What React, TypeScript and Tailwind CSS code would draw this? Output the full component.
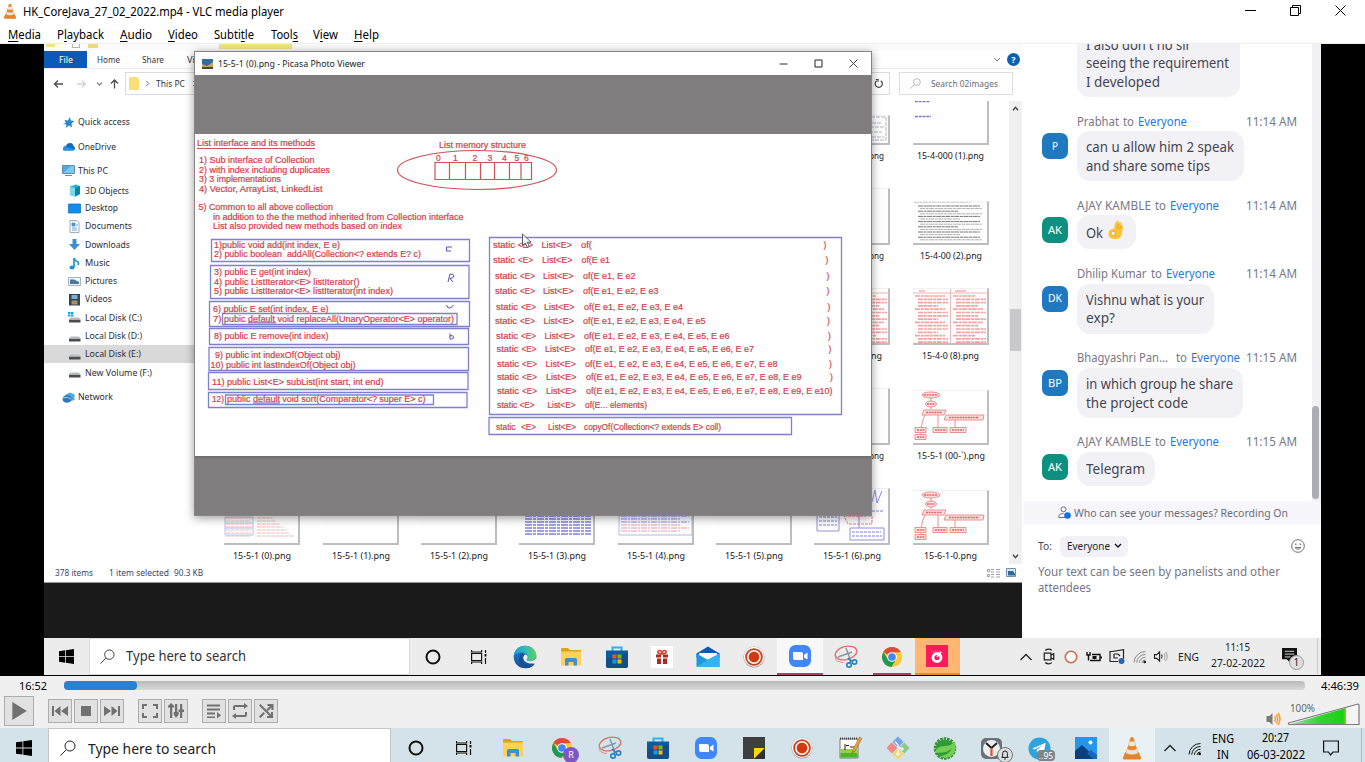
import { useLayoutEffect, useRef, useState, type ReactNode } from "react";

/* Text squeezed or stretched horizontally to a known width. */
function Fit({ w, children, className = "" }: { w: number; children: ReactNode; className?: string }) {
  const ref = useRef<HTMLSpanElement>(null);
  const [scale, setScale] = useState(1);
  useLayoutEffect(() => {
    if (ref.current) setScale(w / ref.current.getBoundingClientRect().width);
  }, []);
  return (
    <span className={`inline-block shrink-0 whitespace-nowrap text-left ${className}`} style={{ width: w }}>
      <span ref={ref} className="inline-block origin-left whitespace-nowrap" style={{ transform: `scaleX(${scale})` }}>
        {children}
      </span>
    </span>
  );
}

/* ---------- Icons ---------- */

const Cone = ({ className }: { className: string }) => (
  <svg viewBox="0 0 20 24" className={className}>
    <path d="M3.500 16h13L19 21.500q.5 2-1 2H2q-1.500 0-1-2z" fill="#e5822a" />
    <path d="M8.500 1.500Q10 .5 11.500 1.500L16.500 18Q10 21.500 3.500 18z" fill="#ee8526" />
    <path d="M7.500 5.500h5l1.200 4Q10 11 6.300 9.500z" fill="#e8e8e4" />
    <path d="M5.200 13Q10 15.500 14.800 13l1.200 4Q10 20 4 17z" fill="#e4e4e0" />
  </svg>
);
const WinLogo = ({ className }: { className: string }) => (
  <svg viewBox="0 0 16 16" className={className}>
    <path d="M0 2.300 6.500 1.400v6.200H0zM7.300 1.300 16 0v7.600H7.300zM0 8.400h6.500v6.200L0 13.700zM7.300 8.400H16V16l-8.700-1.300z" fill="#000" />
  </svg>
);
const Lens = ({ className }: { className: string }) => (
  <svg viewBox="0 0 16 16" className={className} fill="none" stroke="currentColor">
    <circle cx="10" cy="6" r="5" />
    <path d="M6.300 9.700.5 15.500" />
  </svg>
);
const Ring = () => (
  <svg viewBox="0 0 16 16" className="size-4">
    <circle cx="8" cy="8" r="6.500" fill="none" stroke="#111" strokeWidth="2" />
  </svg>
);
const TaskView = () => (
  <svg viewBox="0 0 16 16" className="size-4" fill="none" stroke="#111" strokeWidth="1.200">
    <path d="M.6 4.500h10v7h-10zM.6 1v2h10V1M.6 15v-2h10v2M14.500 1v3M14.500 9v6" />
    <rect x="13.500" y="5" width="2" height="2.500" fill="#111" stroke="none" />
  </svg>
);
const Folder = () => (
  <svg viewBox="0 0 22 20" className="h-5 w-[22px]">
    <path d="M1 2q0-1 1-1h6l2 2h11v15H1z" fill="#e0a413" />
    <path d="M1 4.500h20V18.500H1z" fill="#fcd25c" />
    <path d="M5 18.500V12.500Q5 11 6.500 11h9q1.500 0 1.500 1.500v6h-3.500V15h-5v3.500z" fill="#3d91d3" />
  </svg>
);
const Store = () => (
  <svg viewBox="0 0 24 24" className="size-6">
    <path d="M7.500 7V2.500h9V7" fill="none" stroke="#25b6ee" strokeWidth="2" />
    <path d="M1 5.500h22V21q0 2-2 2H3q-2 0-2-2z" fill="#0d5a9f" />
    <path d="M1 14 23 8v13q0 2-2 2H3q-2 0-2-2z" fill="#1b3f70" opacity=".5" />
    <path d="M7.500 9.500h4v4h-4z" fill="#f25022" />
    <path d="M12.500 9.500h4v4h-4z" fill="#7fba00" />
    <path d="M7.500 14.500h4v4h-4z" fill="#00a4ef" />
    <path d="M12.500 14.500h4v4h-4z" fill="#ffb900" />
  </svg>
);
const Edge = () => (
  <svg viewBox="0 0 24 24" className="size-6">
    <defs>
      <linearGradient id="edgeTop" x1="0" x2="1"><stop offset="0" stopColor="#1b9de2" /><stop offset=".6" stopColor="#35bfb0" /><stop offset="1" stopColor="#66d04c" /></linearGradient>
      <linearGradient id="edgeLow" x1="0" x2="0" y1="0" y2="1"><stop offset="0" stopColor="#1a86d9" /><stop offset="1" stopColor="#164f93" /></linearGradient>
    </defs>
    <circle cx="12" cy="12" r="11.300" fill="url(#edgeLow)" />
    <path d="M.8 11C1.500 4.500 6.500.7 12 .7c6.500 0 11.300 4.500 11.300 9.500 0 3.800-3 6-6 6-2.700 0-3.700-1-3.700-1.700 0-.6 1-1 1-2.800 0-2.500-2.300-4.300-5.500-4.300-4 0-7.300 1.600-8.300 3.600z" fill="url(#edgeTop)" />
    <path d="M13.600 14.500c0 .8 1 1.700 3.700 1.700 2 0 4.200-1 5.300-2.800l1.400 1.800-1.500 3.500-3-.2c-6 .5-10-3-9-7 .3-1 1-1.700 2-2 1.400.5 2.100 1.500 2.100 2.600 0 1.500-1 1.800-1 2.400z" fill="#ececec" />
    <path d="M9 8c-2 1.500-3 3.500-3 5.800 0 5.200 4.500 9.200 8 9.400 3.500 0 6.500-2 8-4.700-6 3-12.500.5-12.500-5 0-1.200.5-2.500 1.500-3.500-.5-1-1-1.700-2-2z" fill="#174f96" />
  </svg>
);
const Chrome = () => (
  <svg viewBox="0 0 24 24" className="size-[22px]">
    <circle cx="12" cy="12" r="11" fill="#fcc934" />
    <path d="M12 12 2.500 6.500A11 11 0 0 1 21.500 6.500L12 7z" fill="#dd4b3c" />
    <path d="M2.500 6.500A11 11 0 0 0 11.500 23L16.500 14.500 12 17 7.500 14.500z" fill="#1d9a55" />
    <circle cx="12" cy="12" r="5.300" fill="#fff" />
    <circle cx="12" cy="12" r="4.200" fill="#4486f4" />
  </svg>
);
const Snip = () => (
  <svg viewBox="0 0 24 24" className="size-6" fill="none">
    <ellipse cx="12" cy="8" rx="11" ry="6.500" stroke="#e26a6a" strokeWidth="1.300" transform="rotate(-14 12 8)" />
    <path d="M1.500 12Q1 17 9 17.500" stroke="#e88" />
    <path d="m4 12 14-5M12 3l4.500 12" stroke="#8a97a3" strokeWidth="1.500" />
    <circle cx="15" cy="20" r="2.200" stroke="#2a84c4" strokeWidth="1.700" />
    <circle cx="20.500" cy="17" r="2.200" stroke="#2a84c4" strokeWidth="1.700" />
    <path d="m14 13 3 3-1.500 2M17 16h2" stroke="#2a84c4" strokeWidth="1.700" />
  </svg>
);
const ZoomIcon = () => (
  <svg viewBox="0 0 24 24" className="size-6">
    <rect x="1" y="1" width="22" height="22" rx="6.500" fill="#4087fc" />
    <path d="M5 8h8q2 0 2 2v6H7q-2 0-2-2zM16 11l3.500-2.500v7L16 13.500z" fill="#fff" />
  </svg>
);
const Rec = () => (
  <svg viewBox="0 0 24 24" className="size-[22px]">
    <circle cx="12" cy="12" r="11.500" fill="#9b9b9b" />
    <circle cx="12" cy="11.700" r="11" fill="#fff" />
    <circle cx="12" cy="12" r="8.600" fill="none" stroke="#c8411a" strokeWidth="2" />
    <circle cx="12" cy="12" r="5.900" fill="#cf3a10" />
  </svg>
);
const Gift = () => (
  <svg viewBox="0 0 22 22" className="size-[22px]">
    <path d="M0 0h22v22H0z" fill="#fff" />
    <path d="M5 8.500h5v3H5zM12 8.500h5v3h-5zM6 12.500h4V18H6zM12 12.500h4V18h-4z" fill="#b0291f" />
    <path d="M11 8C6 8 6 5 8 4.500s3 2 3 3.500c0-1.500 1-4 3-3.500s2 3.500-3 3.500z" fill="none" stroke="#d3452f" strokeWidth="1.500" />
  </svg>
);
const Mail = () => (
  <svg viewBox="0 0 24 24" className="size-6">
    <path d="M.5 8.500 12 1.500l11.500 7V13H.5z" fill="#0d5ca8" />
    <path d="M3 8h18v9H3z" fill="#fff" />
    <path d="M.5 8.500V22h23V8.500L12 15z" fill="#1f97df" />
    <path d="M.5 22 12 14.500 23.500 8.500V22z" fill="#35b3ee" />
  </svg>
);
const Wifi = ({ fade }: { fade?: boolean }) => (
  <svg viewBox="0 0 14 14" className="size-3.5" fill="none" stroke={fade ? "#888" : "#111"} strokeWidth="1">
    <path d="M1 12.500A11.500 11.500 0 0 1 12.500 1.500M3.700 12.700A8.500 8.500 0 0 1 12.500 4.500M6.400 12.800A6 6 0 0 1 12.500 7.300M9 13A3.500 3.500 0 0 1 12.500 10" />
    <circle cx="11.700" cy="12" r="1.300" fill="#111" stroke="none" />
  </svg>
);
const Chevron = () => (
  <svg viewBox="0 0 14 8" className="h-2 w-3.5" fill="none" stroke="#222" strokeWidth="1.300"><path d="m1.500 7 5.500-5.500L12.500 7" /></svg>
);

/* ---------- Player chrome ---------- */

const menus: [string, string, string, number, number][] = [
  ["", "M", "edia", 33, 16], ["P", "l", "ayback", 47, 16], ["", "A", "udio", 32, 16], ["", "V", "ideo", 30, 16],
  ["Subti", "t", "le", 40, 16.5], ["Tool", "s", "", 27, 15.5], ["V", "i", "ew", 25, 16], ["", "H", "elp", 25, 0],
];

function TitleBar() {
  return (
    <header className="flex h-11 shrink-0 flex-col border-b border-[#eeeeee] bg-white text-[12px] leading-none text-black">
      <div className="flex h-6 items-center pl-[3px]">
        <Cone className="mb-[2px] h-4 w-[14px]" />
        <Fit w={261} className="ml-[6px]">HK_CoreJava_27_02_2022.mp4 - VLC media player</Fit>
        <div className="ml-auto flex h-5 items-center gap-[34px] pr-[19px] pb-[3px]">
          <svg viewBox="0 0 11 11" className="size-[11px]"><path d="M0 5.500h11" stroke="#000" /></svg>
          <svg viewBox="0 0 11 11" className="size-[11px]" fill="none" stroke="#000"><path d="M.5 2.500h8v8h-8zM2.500 2.500v-2h8v8h-2" /></svg>
          <svg viewBox="0 0 11 11" className="size-[11px]" stroke="#000"><path d="m.5.5 10 10M10.500.5l-10 10" /></svg>
        </div>
      </div>
      <nav className="flex h-[19px] items-center pt-[2px] pl-2">
        {menus.map(([a, u, b, w, gap]) => (
          <span key={a + u + b} className="flex" style={{ marginRight: gap }}>
            <Fit w={w}>{a}<span className="underline underline-offset-2">{u}</span>{b}</Fit>
          </span>
        ))}
      </nav>
    </header>
  );
}

function CtlButton({ children, big }: { children: ReactNode; big?: boolean }) {
  return (
    <button className={`flex items-center justify-center border border-[#adadad] bg-[#e1e1e1] ${big ? "size-[30px]" : "size-6"}`}>
      <svg viewBox="0 0 18 18" className={big ? "size-5" : "size-[18px]"} fill="#717171" stroke="none">{children}</svg>
    </button>
  );
}

function Controls() {
  return (
    <section className="flex h-[52px] shrink-0 flex-col bg-[#f0f0f0]">
      <div className="flex h-[19px] items-center text-[11.5px] leading-none text-black">
        <Fit w={28} className="ml-[19px]">16:52</Fit>
        <div className="ml-[17px] h-[9px] w-[1241px] rounded bg-linear-to-b from-[#b9b9b9] to-[#dadada]">
          <div className="h-full w-[73px] rounded bg-[#2b80d2]" />
        </div>
        <Fit w={38} className="ml-4">4:46:39</Fit>
      </div>
      <div className="flex h-[33px] items-center pb-[1px] pl-1">
        <CtlButton big><path d="M3 1v16l13-8z" /></CtlButton>
        <div className="ml-[14px] flex gap-[2px]">
          <CtlButton><path d="M1 4h2v10H1zM9.500 4v10L3.500 9zM17 4v10L10 9z" /></CtlButton>
          <CtlButton><path d="M4 4h10v10H4z" /></CtlButton>
          <CtlButton><path d="M15 4h2v10h-2zM1 4v10l7-5zM8.500 4v10l6-5z" /></CtlButton>
        </div>
        <div className="ml-[14px] flex gap-[2px]">
          <CtlButton><path d="M1 2h5v2H3v3H1zM12 2h5v5h-2V4h-3zM1 11h2v3h3v2H1zM15 11h2v5h-5v-2h3z" /></CtlButton>
          <CtlButton><path d="M3 4.500h2.200V16H3zM1 4l3-3 3.200 3v1.500H1zM8 2h2.200v9H8zM6.700 10h5v2.500L9 16l-2.300-3.500zM13 2h2.200v14H13zM11.500 7.500H17v2.500h-5.500z" /></CtlButton>
        </div>
        <div className="ml-[14px] flex gap-[2px]">
          <CtlButton><path d="M2 2.500h13v2H2zM2 6.500h13v2H2zM2 10.500h8v2H2zM2 14.500h8v1.500H2zM12 10l4 3.200-4 3.200z" /></CtlButton>
          <CtlButton><path d="M2 8V5q0-2 2-2h9V1l4 3-4 3V5H4v3zM16 10v3q0 2-2 2H5v2l-4-3 4-3v2h9v-3z" /></CtlButton>
          <CtlButton><path d="m2 3.500 1.500-1.500L14 12.500V10h2v6h-6v-2h2.500zM10.500 2h6v6h-2V5.500L11 9 9.500 7.500 12.800 4h-2.300zM2 14.500 6.500 10 8 11.500 3.500 16z" /></CtlButton>
        </div>
        <div className="ml-auto flex items-start self-start pr-[5px]">
          <svg viewBox="0 0 14 14" className="mt-[17px] h-[14px] w-[15px]" fill="none">
            <path d="M0 4h3l3-3v12l-3-3H0z" fill="#7a7a7a" />
            <path d="M8 4.500q2 2.500 0 5M9.500 2.500q3.500 4.500 0 9M11.500 1q4 6 0 12" stroke="#f59a23" strokeWidth="1.400" />
          </svg>
          <div className="relative ml-[6px] h-[33px] w-[73px]">
            <svg viewBox="0 0 73 33" className="h-[33px] w-[73px]">
              <defs><linearGradient id="vol" x1="0" x2="1"><stop offset="0" stopColor="#a5dfa3" /><stop offset=".55" stopColor="#31d430" /><stop offset=".95" stopColor="#1dd013" /><stop offset="1" stopColor="#a0c51a" /></linearGradient></defs>
              <path d="M2 29.500 71 9.500q1 0 1 1v19z" fill="#f5f5f5" />
              <path d="M2 29.500 59 13v16.500z" fill="url(#vol)" />
              <path d="M1.500 28 71 9q1 0 1 1v19.500H3q-2 0-1.500-1.500z" fill="none" stroke="#7b7b7b" strokeWidth="1.200" />
            </svg>
            <div className="absolute top-2 left-[3px] text-[10px] leading-none text-[#5c6770]"><Fit w={25}>100%</Fit></div>
          </div>
        </div>
      </div>
    </section>
  );
}

function Cell({ w = "w-[48.2px]", children }: { w?: string; children: ReactNode }) {
  return <div className={`relative flex h-full shrink-0 items-center justify-center ${w}`}>{children}</div>;
}

function OuterTaskbar() {
  return (
    <footer className="h-[34px] shrink-0 overflow-hidden bg-[#d4e3ea]">
      <div className="flex h-10 items-center text-black">
        <Cell w="w-[48px]"><WinLogo className="size-4" /></Cell>
        <div className="flex h-full w-[343px] shrink-0 items-center border border-[#c5c5c5] bg-white text-[14.5px] leading-none text-[#222]">
          <Lens className="ml-[11px] size-4" />
          <Fit w={128} className="ml-[12px]">Type here to search</Fit>
        </div>
        <Cell w="w-[49px]"><Ring /></Cell>
        <Cell w="w-[48px]"><TaskView /></Cell>
        <Cell w="w-[50px]"><Folder /></Cell>
        <Cell>
          <Chrome />
          <span className="absolute top-[19px] left-[25px] flex size-4 items-center justify-center rounded-full bg-[#7e57c2] text-[9px] text-white">R</span>
        </Cell>
        <Cell w="w-[48px]"><Snip /></Cell>
        <Cell w="w-[47.3px]"><Store /></Cell>
        <Cell><ZoomIcon /></Cell>
        <Cell><svg viewBox="0 0 22 22" className="size-[22px]"><path d="M0 0h22v22H0z" fill="#3f3f3f" /><path d="M11 11h11L11 22z" fill="#ffd500" /><path d="M22 11v11H11z" fill="#303030" /></svg></Cell>
        <Cell w="w-[48px]"><Rec /></Cell>
        <Cell w="w-[48px]">
          <svg viewBox="0 0 24 24" className="size-6">
            <path d="M2 3h18v19H2z" fill="#fdfdf6" stroke="#777" /><path d="M2.500 13h17v8.500h-17z" fill="#8fd14a" /><path d="M2.500 17h17v4.500h-17z" fill="#4db52c" />
            <path d="M2 2.500h18" stroke="#444" strokeWidth="2" strokeDasharray="1 1" /><path d="M7 8v6M8 9.500h3M12 11h5" stroke="#222" />
            <path d="m14 17 1-3.500L21.500 1 24 2.500 17 15z" fill="#eaa338" stroke="#8c5a1c" strokeWidth=".5" />
          </svg>
        </Cell>
        <Cell w="w-[48px]">
          <svg viewBox="0 0 24 24" className="size-6">
            <path d="m12 .5 5.500 5.500L12 11.500 6.500 6z" fill="#6fa5e8" /><path d="m5.500 6.500 6 5.500-5.500 5.500L.5 12z" fill="#f08a80" />
            <path d="m18.500 6.500 5 5.500-5 5.500L12.500 12z" fill="#8cc98a" /><path d="m12 12.500 5.500 5.500-5.500 5.500L6.500 18z" fill="#f5d66c" />
            <path d="M9 5.500 12 9v9M12 11l4 2" stroke="#eee" strokeWidth="1.500" fill="none" /><circle cx="12" cy="18" r="1.800" fill="#eee" /><circle cx="16" cy="13" r="1.800" fill="#eee" />
          </svg>
        </Cell>
        <Cell w="w-[47px]">
          <svg viewBox="0 0 24 24" className="size-6">
            <circle cx="12" cy="13" r="9.500" fill="#2f9a35" /><circle cx="12" cy="12.500" r="10" fill="none" stroke="#2f8f33" strokeWidth="2.500" strokeDasharray="2.500 1" />
            <path d="M2 17q1-7 10-7 7 0 10-5 2 10-3 14.500T6 20q9 0 13-8-5 4.500-10 4.500t-7 .5z" fill="#77cf52" />
          </svg>
        </Cell>
        <Cell w="w-[47px]">
          <svg viewBox="0 0 24 24" className="size-6">
            <rect x="1" y="2" width="21" height="21" rx="5" fill="#6b7177" /><circle cx="11.500" cy="12.500" r="8.500" fill="#eceff1" />
            <path d="m6 7 5.500 5L17 7" stroke="#222" strokeWidth="2" fill="none" /><path d="M11.500 12v8" stroke="#e2512b" strokeWidth="2.200" />
          </svg>
          <span className="absolute top-[19px] left-[28px] flex size-4 items-center justify-center rounded-full border border-[#777] bg-[#d9dfe2]">
            <svg viewBox="0 0 10 12" className="h-[10px] w-2" fill="none" stroke="#111" strokeWidth="1.200"><path d="M1 9h8L8 7.500V4a3 3 0 0 0-6 0v3.500zM4 11h2" /></svg>
          </span>
        </Cell>
        <Cell w="w-[46.5px]">
          <svg viewBox="0 0 24 24" className="size-[23px]"><circle cx="12" cy="12" r="11.500" fill="#2fa3dc" /><path d="m4.500 12 14-6-2.500 12.500-4.500-3.300-2 2-.5-3.700 6-5-8 4.500z" fill="#fff" /></svg>
          <span className="absolute top-[22px] left-[21px] rounded-sm bg-[#7d8589] px-[2px] text-[8.5px] leading-[11px] text-white">..95</span>
        </Cell>
        <Cell w="w-[46.500px]">
          <svg viewBox="0 0 22 22" className="size-[22px]"><path d="M0 0h22v22H0z" fill="#2796ea" /><path d="m0 14 7-6 15 14H0z" fill="#0b3f7e" /><path d="m12 16 4-3 6 5v4h-4z" fill="#1968b8" /><circle cx="15.500" cy="5.500" r="2" fill="#fff" /></svg>
        </Cell>
        <div className="flex h-full w-[46px] shrink-0 items-center justify-center bg-[#eaf1f4]"><Cone className="h-6 w-5" /></div>
        <div className="ml-[8px] flex items-center"><Chevron /></div>
        <div className="ml-[11px] pt-[2px]"><Wifi /></div>
        <div className="ml-[10px] flex h-full flex-col items-center pt-[5px] text-[12px] leading-none text-black"><Fit w={22}>ENG</Fit><Fit w={12} className="mt-[4px]">IN</Fit></div>
        <div className="ml-[13px] flex h-full w-[58px] flex-col items-center pt-[4px] text-[12px] leading-none text-black"><Fit w={27}>20:27</Fit><Fit w={58} className="mt-[5px]">06-03-2022</Fit></div>
        <svg viewBox="0 0 16 16" className="ml-[18px] size-4" fill="none" stroke="#111" strokeWidth="1.200"><path d="M.6 1h14.800v11H10l-2.500 3L5.500 12H.6z" /></svg>
        <div className="ml-auto mr-[3px] h-full w-px bg-[#a9b7be]" />
      </div>
    </footer>
  );
}

/* ---------- Explorer ---------- */

type NavItem = { label: string; w: number; indent: boolean; h: string; kind: string };
const navItems: NavItem[] = [
  { label: "Quick access", w: 52, indent: false, h: "h-6", kind: "star" },
  { label: "OneDrive", w: 38, indent: false, h: "h-[25px]", kind: "cloud" },
  { label: "This PC", w: 30, indent: false, h: "h-[23px]", kind: "pc" },
  { label: "3D Objects", w: 44, indent: true, h: "h-[17px]", kind: "cube" },
  { label: "Desktop", w: 33, indent: true, h: "h-[18px]", kind: "desktop" },
  { label: "Documents", w: 47, indent: true, h: "h-[18px]", kind: "doc" },
  { label: "Downloads", w: 45, indent: true, h: "h-[19px]", kind: "down" },
  { label: "Music", w: 25, indent: true, h: "h-[18px]", kind: "music" },
  { label: "Pictures", w: 32, indent: true, h: "h-[18px]", kind: "pic" },
  { label: "Videos", w: 27, indent: true, h: "h-[18px]", kind: "video" },
  { label: "Local Disk (C:)", w: 57, indent: true, h: "h-[19px]", kind: "diskc" },
  { label: "Local Disk (D:)", w: 57, indent: true, h: "h-[18px]", kind: "disk" },
  { label: "Local Disk (E:)", w: 56, indent: true, h: "h-[18px]", kind: "disk" },
  { label: "New Volume (F:)", w: 67, indent: true, h: "h-[19px]", kind: "disk" },
  { label: "Network", w: 35, indent: false, h: "h-[30px]", kind: "net" },
];

function NavIcon({ kind }: { kind: string }) {
  return (
    <svg viewBox="0 0 13 13" className="size-[13px] shrink-0">
      {kind === "star" && <path d="m8 1 .8 3.500 3.700.5-3 2.500.5 4-3-2-3.500 2.500 1-3.500L.8 8l3-1L2.500 4l3.500.5z" fill="#2b84c9" />}
      {kind === "cloud" && <><path d="M1 9q0-3 3-3 1-3 4-3 3 0 3.500 3 1.500.5 1.500 2.500T11 10.500H2.500Q1 10.500 1 9z" fill="#0f6cbd" /><path d="M1 9q1-3 4-2l7.500 2.500q-.5 1-1.500 1H2.500Q1 10.500 1 9z" fill="#2196e3" /></>}
      {kind === "pc" && <><path d="M.5 1.500h12v8H.5z" fill="#4ca9e6" stroke="#42728f" strokeWidth=".7" /><path d="m1 9 8-7h3v7z" fill="#7cc8f3" /><path d="M3 11.500h7" stroke="#6b8ea2" /></>}
      {kind === "cube" && <><path d="M2 2.500 8 .5l4 1.500v8L7 12.500 2 11z" fill="#27b3cb" /><path d="m2 2.500 5 1.500v8.500L2 11z" fill="#7edae8" /><path d="m7 4 5-2v8l-5 2.500z" fill="#0b86a5" /></>}
      {kind === "desktop" && <path d="M.5 2h12v9H.5z" fill="#118dec" stroke="#0c65b7" strokeWidth=".7" />}
      {kind === "doc" && <><path d="M2 .5h7l2 2v10H2z" fill="#f7fafc" stroke="#8c9aa5" strokeWidth=".8" /><path d="M4 3h3v3H4zM4 8h5M4 10h5M8 5h2" fill="#4b96c7" stroke="#4b96c7" strokeWidth=".8" /></>}
      {kind === "down" && <path d="M4.500 1h4v5H12l-5.500 6L1 6h3.500z" fill="#3d8ed2" />}
      {kind === "music" && <><path d="M6 1v9M6 1q1 3 4 4 1 1 0 3" stroke="#1c94e0" strokeWidth="1.700" fill="none" /><ellipse cx="4" cy="10.500" rx="2.500" ry="2" fill="#1c94e0" /></>}
      {kind === "pic" && <><path d="M.5 2.500h12v8H.5z" fill="#eef4f7" stroke="#91a2ad" strokeWidth=".8" /><path d="M2 4.500h4l5 2.500v2H2z" fill="#47799e" /></>}
      {kind === "video" && <><path d="M1 1h11v11.500H1z" fill="#3a444c" /><path d="M3.500 2h6v4h-6z" fill="#7cb0d2" /><path d="M3.500 7.500h6v4h-6z" fill="#a39366" /></>}
      {kind.startsWith("disk") && <><path d="M1 8.500h11.500v3H1z" fill="#4b4d4f" /><path d="M2.500 6.500H11l1.500 2H1z" fill="#b9bcbe" /></>}
      {kind === "diskc" && <path d="M0 1h2.500v2H0zM3 1h2.500v2H3zM0 3.500h2.500v2H0zM3 3.500h2.500v2H3z" fill="#1aa3ea" />}
      {kind === "net" && <><path d="M3 4 8 1.500l4.500 2V9L7 10.500z" fill="#4ea7dd" /><ellipse cx="5" cy="8" rx="4.500" ry="3.800" fill="#2a79b8" /><path d="M1 7q4-2 8 1" stroke="#9fd2ef" fill="none" /></>}
    </svg>
  );
}

function NavPane() {
  return (
    <aside className="flex w-[151px] shrink-0 flex-col pt-[10px] text-[9.5px] leading-none text-[#2d2d33]">
      {navItems.map((it) => (
        <div key={it.label} className={`flex shrink-0 items-center ${it.h} ${it.indent ? "pl-6" : "pl-[18px]"} ${it.label.includes("(E:)") ? "bg-[#d9d9d9]" : ""}`}>
          <NavIcon kind={it.kind} />
          <Fit w={it.w} className={it.indent ? "ml-[3.5px]" : "ml-[3px]"}>{it.label}</Fit>
        </div>
      ))}
    </aside>
  );
}

function FlowThumb() {
  return (
    <svg viewBox="0 0 75 54" className="h-[54px] w-[75px] shrink-0" fill="#fbe2e2" stroke="#e87878" strokeWidth=".8">
      <path d="M18 8v12M13 24Q9 30 8 40M25 24v16M42 28v12M8 44v5" fill="none" />
      <ellipse cx="18" cy="6" rx="9" ry="3" />
      <ellipse cx="18" cy="15" rx="5.500" ry="3" />
      <path d="M11 21h22l-2 5H9zM33 26h38l-1 5H31zM2 38.500h11v5H2zM20 38.500h14v5H20zM37 38.500h16v5H37zM2 45.500h11v5H2z" />
      <path d="M11 6h14M14 15h8M13 23.500h16M36 28.500h30M4 41h8M22 41h11M39 41h12M4 48h8" stroke="#df6262" strokeWidth="1.300" strokeDasharray="2 .7" />
    </svg>
  );
}

function Thumb({ kind }: { kind: string }) {
  const rows = Array.from({ length: 15 }, (_, i) => i);
  if (kind === "flow") return <FlowThumb />;
  return (
    <svg viewBox="0 0 75 54" className="h-[54px] w-[75px] shrink-0" fill="none">
      {kind === "solution" && <path d="M2 12.500h15M2 27.500h16" stroke="#7a7ad0" strokeWidth="1.500" strokeDasharray="3 .8" />}
      {kind === "text" && <>
        <path d="M1 13h56" stroke="#aaa" strokeDasharray="5 .6 3 .5" />
        {rows.slice(0, 14).map((i) => <path key={i} d={`M${i % 2 ? 7 : 5} ${17 + i * 2.600}h${i % 3 === 2 ? 40 : 62}`} stroke={i % 2 ? "#b0b0b0" : "#777"} strokeWidth="1" strokeDasharray="5 .6 3 .5" />)}
      </>}
      {kind === "red" && <>
        {rows.map((i) => <path key={i} d={`M${i % 4 ? 5 : 2} ${7 + i * 3.300}h${i % 4 === 3 ? 20 : 30}M${i % 4 ? 43 : 40} ${7 + i * 3.300}h${i % 3 ? 30 : 22}`} stroke="#f2a3a3" strokeWidth="1.700" strokeDasharray="5 .8 3 .6" />)}
        <path d="M6 2h6M42 2h11" stroke="#e88" /><path d="M37.500 0v54M0 4h75" stroke="#e49a9a" strokeWidth=".7" />
      </>}
      {kind === "list" && <><path d="M1 28h28v18H1zM1 34h28M1 39h28" stroke="#b0b0e4" strokeWidth=".8" />{rows.slice(0, 8).map((i) => <path key={i} d={`M2 ${26 + i * 3}h25M33 ${26 + i * 3}h${12 + i * 3.500}`} stroke="#f0b8b8" strokeWidth=".9" strokeDasharray="4 .7" />)}</>}
      {kind === "blue" && rows.slice(0, 9).map((i) => <path key={i} d={`M6 ${21 + i * 3}h66`} stroke="#8080e0" strokeWidth="1.500" strokeDasharray="7 1 3 1" />)}
      {kind === "mix" && <>{rows.slice(0, 8).map((i) => <path key={i} d={`M3 ${21 + i * 3}h${i % 2 ? 60 : 68}`} stroke={i > 4 ? "#e79ab2" : "#9090e4"} strokeWidth="1.200" strokeDasharray="6 1 2 1" />)}<path d="M1 16h73v30H1z" stroke="#a4a4e0" strokeWidth=".8" /></>}
      {kind === "diagram" && <><path d="M3 24h22v18H3zM36 39h34v12H36zM45 22v17M58 3q-7 9 0 10l3-12 2 13 5-12" stroke="#8f8fe0" /><path d="M5 28h18M5 32h18M5 36h18M38 43h29M38 47h30M50 22h20" stroke="#8080da" strokeDasharray="3 1" /><path d="M30 27h28v8H34zM2 20h50" stroke="#e08585" strokeDasharray="3 1" /></>}
      {kind === "sketch" && <path d="M42 28h30v23H44zM48 34h20M46 38h24M50 43h18M48 48h22M52 30v16" stroke="#b4b4c4" strokeDasharray="4 1" />}
    </svg>
  );
}

type File = { name: string; w: number; kind: string; h?: string } | null;
const col7: File[] = [
  { name: "png", w: 15, kind: "sketch", h: "h-[30px]" },
  { name: "png", w: 15, kind: "blank", h: "h-[57px]" },
  { name: "ng", w: 11, kind: "red", h: "h-[57px]" },
  { name: "png", w: 15, kind: "blank", h: "h-[57px]" },
];
const col8: File[] = [
  { name: "15-4-000 (1).png", w: 67, kind: "solution", h: "h-[54px]" },
  { name: "15-4-00 (2).png", w: 62, kind: "text", h: "h-[44px]" },
  { name: "15-4-0 (8).png", w: 57, kind: "red", h: "h-[57px]" },
  { name: "15-5-1 (00-`).png", w: 68, kind: "flow", h: "h-[55px]" },
];
const lastRow: File[] = [
  { name: "15-5-1 (0).png", w: 58, kind: "list" }, { name: "15-5-1 (1).png", w: 58, kind: "blank" }, { name: "15-5-1 (2).png", w: 58, kind: "blank" },
  { name: "15-5-1 (3).png", w: 58, kind: "blue" }, { name: "15-5-1 (4).png", w: 58, kind: "mix" }, { name: "15-5-1 (5).png", w: 58, kind: "blank" },
  { name: "15-5-1 (6).png", w: 58, kind: "diagram", h: "h-[57px]" }, { name: "15-6-1-0.png", w: 53, kind: "flow", h: "h-[55px]" },
];

function FileCell({ file }: { file: File }) {
  if (!file) return <div />;
  return (
    <div className="flex flex-col items-center justify-end">
      <div className={`flex w-[76px] items-end overflow-hidden border-t border-r-2 border-b-2 border-t-[#f1f1f1] border-r-[#bdbdbd] border-b-[#bdbdbd] bg-[#fefefe] ${file.h ?? "h-[54px]"}`}>
        <Thumb kind={file.kind} />
      </div>
      <div className={`flex h-[22px] w-full items-center justify-center text-[9.8px] leading-none text-[#17171b] ${file.name.length < 5 ? "pl-[49px]" : ""}`}>
        <Fit w={file.w}>{file.name}</Fit>
      </div>
    </div>
  );
}

function Explorer() {
  const grid: File[] = [];
  for (let r = 0; r < 4; r++) grid.push(null, null, null, null, null, null, col7[r], col8[r]);
  grid.push(...lastRow);
  return (
    <section className="relative flex h-[539px] w-[978px] flex-col bg-white text-[9.5px] leading-none text-[#33343c]">
      <div className="flex h-[7px] shrink-0 items-start bg-[#fbfbfb]">
        <div className="ml-[2px] h-[3px] w-[9px] bg-[#f4e08b]" />
        <div className="ml-[17px] h-[4px] w-[8px] border border-t-0 border-[#b5b5b5]" />
        <div className="ml-[8px] h-[4px] w-[10px] bg-[#efd97b]" />
        <div className="ml-[121px] h-[5px] w-[73px] bg-[#efe67c]" />
      </div>
      <div className="flex h-[17px] shrink-0 items-center">
        <div className="flex h-[17px] w-[43px] items-center justify-center bg-[#0a5bb5] text-white"><Fit w={14}>File</Fit></div>
        <Fit w={23} className="ml-[10px]">Home</Fit>
        <Fit w={22} className="ml-[22px]">Share</Fit>
        <Fit w={20} className="ml-[23px]">View</Fit>
        <svg viewBox="0 0 8 6" className="ml-auto mr-[6px] h-[6px] w-2" fill="none" stroke="#777"><path d="m1 1 3 3 3-3" /></svg>
        <span className="mr-[2px] flex size-[13px] items-center justify-center rounded-full bg-[#0b62b3] text-[9px] font-bold text-white">?</span>
      </div>
      <div className="flex h-8 shrink-0 items-center border-t border-[#ececec] pr-[9px] pb-[2px]">
        <svg viewBox="0 0 70 14" className="ml-[9px] h-[14px] w-[70px]" fill="none" stroke="#4d4d4d" strokeWidth="1.300">
          <path d="M10 7H1.500M5 3.500 1.500 7 5 10.500M61.500 11.500V3M58 6.500 61.500 3 65 6.500" />
          <path d="M24 7h8M29 3.500 32.500 7 29 10.500" stroke="#d3d3d3" />
          <path d="m44 5.500 2.500 2.500L49 5.500" stroke="#888" />
        </svg>
        <div className="ml-[2px] flex h-[23px] w-[765px] items-center border border-[#dcdcdc]">
          <svg viewBox="0 0 10 13" className="ml-[3px] h-[13px] w-[10px]"><path d="M0 0h8l2 2v11H0z" fill="#f9df78" /></svg>
          <svg viewBox="0 0 5 8" className="ml-[6px] h-[7px] w-[5px]" fill="none" stroke="#555"><path d="m1 1 3 3-3 3" /></svg>
          <Fit w={29} className="ml-[6px]">This PC</Fit>
          <svg viewBox="0 0 5 8" className="ml-[7px] h-[7px] w-[5px]" fill="none" stroke="#555"><path d="m1 1 3 3-3 3" /></svg>
          <svg viewBox="0 0 10 10" className="ml-auto mr-[6px] size-[9px]" fill="none" stroke="#444" strokeWidth="1.300"><path d="M7.500 2A4 4 0 1 1 3 2M2 .5h2.500V3" /></svg>
        </div>
        <div className="ml-auto flex h-[23px] w-[114px] items-center border border-[#dedede] pl-[10px] text-[#6a6b72]">
          <Lens className="size-[11px] text-[#999]" />
          <Fit w={67} className="ml-[9.5px]">Search 02images</Fit>
        </div>
      </div>
      <div className="flex min-h-0 flex-1">
        <NavPane />
        <div className="flex min-w-0 flex-1 overflow-hidden pl-[18px]">
          <div className="-mt-[33px] grid h-[500px] w-[787px] shrink-0 grid-cols-8 grid-rows-5 [clip-path:inset(34px_0_0_0)]">
            {grid.map((f, i) => <FileCell key={i} file={f} />)}
          </div>
        </div>
        <div className="mt-[1px] flex h-[463px] w-[13px] shrink-0 flex-col items-center justify-between bg-[#f0f0f1] py-[5px]">
          <svg viewBox="0 0 8 6" className="h-[5px] w-[7px]" fill="none" stroke="#444" strokeWidth="1.700"><path d="m1 5 3-3.500L7 5" /></svg>
          <div className="mt-[198px] h-[42px] w-[11px] bg-[#c9c9cb]" />
          <svg viewBox="0 0 8 6" className="mt-auto h-[5px] w-[7px]" fill="none" stroke="#444" strokeWidth="1.700"><path d="m1 1 3 3.500L7 1" /></svg>
        </div>
      </div>
      <div className="flex h-[18px] shrink-0 items-center border-b border-[#999] pb-[1px] pl-[11px] text-[#3a4568]">
        <Fit w={38}>378 items</Fit>
        <Fit w={60} className="ml-[16px]">1 item selected</Fit>
        <Fit w={29} className="ml-[5px]">90.3 KB</Fit>
        <svg viewBox="0 0 30 10" className="ml-auto mr-[5px] h-[10px] w-[30px]" fill="none" stroke="#8a8a8a">
          <path d="M.5 1.500h2v2h-2zM.5 6.500h2v2h-2zM4 1.500h3M4 4h3M4 6.500h3M4 9h3M9 1.500h4M9 4h4M9 6.500h4M9 9h4" strokeWidth=".8" /><path d="M19.500.5h9v8h-9z" fill="#d8e9f7" stroke="#6f92b5" /><path d="M21 3h5l2 3v1.500h-7z" fill="#31689c" stroke="none" />
        </svg>
      </div>
      <Viewer />
    </section>
  );
}

/* ---------- Photo viewer ---------- */

type Line = [number, number, number, string];
const leftLines: Line[] = [
  [197, 315, 145.5, "List interface and its methods"],
  [199, 314.5, 162.5, "1) Sub interface of Collection"],
  [199, 330, 172.5, "2) with index including duplicates"],
  [199, 281, 182, "3) 3 implementations"],
  [199, 322.5, 191.5, "4) Vector, ArrayList, LinkedList"],
  [198.5, 333, 210, "5) Common to all above collection"],
  [213, 463.5, 219.5, "in addition to the the method inherited from Collection interface"],
  [213, 402, 229, "List also provided new methods based on index"],
  [214, 340, 247.5, "1)public void add(int index, E e)"],
  [214, 421, 257, "2) public boolean  addAll(Collection<? extends E? c)"],
  [214, 311, 275, "3) public E get(int index)"],
  [214, 359.5, 284.5, "4) public ListIterator<E> listIterator()"],
  [214, 393, 294, "5) public ListIterator<E> listIterator(int index)"],
  [213, 328.5, 311.5, "6) public E set(int index, E e)"],
  [213, 221.5, 321.5, "7)"],
  [224, 454, 321.5, "pubic default void replaceAll(UnaryOperator<E> operator)"],
  [214, 328.5, 339, "8) public E remove(int index)"],
  [215, 340.5, 357.5, "9) public int indexOf(Object obj)"],
  [210.5, 355.5, 367.5, "10) public int lastIndexOf(Object obj)"],
  [212, 383.5, 384.5, "11) public List<E> subList(int start, int end)"],
  [212, 224, 402, "12)"],
  [227, 425.5, 402, "public default void sort(Comparator<? super E> c)"],
  [439, 526, 147.5, "List memory structure"],
];
const rowSpecs: [number, number, number, number, number, number, string][] = [
  [493, 541.5, 581, 592, 823.5, 248, "of("],
  [493, 542, 581.5, 610, 825.5, 262.5, "of(E e1"],
  [495, 543, 583, 635.5, 826.5, 279, "of(E e1, E e2"],
  [495, 543, 583, 658.5, 826.5, 294, "of(E e1, E e2, E e3"],
  [496, 544, 584, 683, 827.5, 309.5, "of(E e1, E e2, E e3, E e4"],
  [495, 543.5, 583, 705.5, 827, 324, "of(E e1, E e2, E e3, E e4, E e5"],
  [496, 544.5, 584, 729.5, 828, 339, "of(E e1, E e2, E e3, E e4, E e5, E e6"],
  [496.5, 545, 585, 754, 828.5, 352, "of(E e1, E e2, E e3, E e4, E e5, E e6, E e7"],
  [497, 545.5, 585, 777.5, 829, 366.5, "of(E e1, E e2, E e3, E e4, E e5, E e6, E e7, E e8"],
  [497, 546, 586, 801.5, 830, 380, "of(E e1, E e2, E e3, E e4, E e5, E e6, E e7, E e8, E e9"],
  [497, 546, 586, 832.5, 0, 393.5, "of(E e1, E e2, E e3, E e4, E e5, E e6, E e7, E e8, E e9, E e10)"],
  [497, 547.5, 585, 647, 0, 407.5, "of(E... elements)"],
  [496, 548, 584, 721, 0, 430, "copyOf(Collection<? extends E> coll)"],
];
const indexMarks: [number, string][] = [[436, "0"], [453, "1"], [472.5, "2"], [487.5, "3"], [502, "4"], [514.5, "5"], [524, "6"]];

function Slide() {
  return (
    <svg viewBox="195 134 676 322" className="block h-[322px] w-[676px] bg-[#fefefe]">
      <g fill="none" stroke="#8080cf" strokeWidth="1.300">
        <path d="M211.500 239.500h258v22h-258zM210.500 265.500h258.500v33h-258.500zM209.500 301.500h260v25h-260zM222.500 313.500h234.500v11h-234.500zM209.500 328.500h259v16h-259zM209 347.500h259.500v23h-259.500zM208.500 372.500h259.500v17h-259.500zM208.500 392.500h258.500v15h-258.500zM225.500 395h208v9.500h-208zM489.500 237.500h352v177h-352zM489 417.500h302.500v17h-302.500z" />
        <path d="M248 322.800h28M253 403h27" stroke="#8a4aa0" strokeWidth="1" />
        <path d="M452 247h-5.500v4h4.500M448 282l2-8q4 0 4 2t-4 2.500l3 3.500M446.500 305q1 4 3.500 3t3.500-3M450 333.500v5.500q4 .5 3.500-2t-3.500-1" stroke="#5252b8" strokeWidth="1" />
      </g>
      <g fill="none" stroke="#d2505a" strokeWidth="1.200">
        <path d="M197 148.500h118" />
        <ellipse cx="477" cy="170" rx="79.500" ry="19.500" />
        <path d="M435 162.500h96.500v17H435zM449.500 162.500v17M465.500 162.500v17M480.500 162.500v17M494.500 162.500v17M509.500 162.500v17M521 162.500v17" />
      </g>
      <g fill="#d33f4b" stroke="#d33f4b" strokeWidth=".2" fontFamily="'Liberation Sans', Arial, sans-serif" fontSize="8.500">
        {leftLines.map(([x, end, y, s]) => <text key={s} x={x} y={y} textLength={end - x} lengthAdjust="spacingAndGlyphs" xmlSpace="preserve">{s}</text>)}
        {indexMarks.map(([x, s]) => <text key={s} x={x} y="160.500">{s}</text>)}
        {rowSpecs.map(([a, b, c, end, p, y, s], i) => (
          <g key={s}>
            <text x={a} y={y} textLength={i === 12 ? 19.5 : i === 11 ? 20.5 : 22} lengthAdjust="spacingAndGlyphs">static</text>
            <text x={a + (i === 11 ? 22.5 : 25)} y={y} textLength="15" lengthAdjust="spacingAndGlyphs">&lt;E&gt;</text>
            <text x={b} y={y} textLength={i > 10 ? 28 : 30.5} lengthAdjust="spacingAndGlyphs">List&lt;E&gt;</text>
            <text x={c} y={y} textLength={end - c} lengthAdjust="spacingAndGlyphs">{s}</text>
            {p > 0 && <text x={p} y={y}>)</text>}
          </g>
        ))}
      </g>
      <path d="M522.500 234v11.500l2.800-2.500 2 4.500 2-1-2-4.300h3.700z" fill="#fff" stroke="#333" strokeWidth=".8" />
    </svg>
  );
}

function Viewer() {
  return (
    <div className="absolute top-[7px] left-[150px] flex h-[465px] w-[678px] flex-col border border-[#858585] bg-[#807d7f] shadow-[0_2px_9px_rgba(0,0,0,0.4)]">
      <div className="flex h-[23px] shrink-0 items-center bg-white text-[9.8px] text-[#222]">
        <svg viewBox="0 0 11 10" className="ml-[7px] h-[10px] w-[11px]"><path d="M0 0h11v10H0z" fill="#306e9c" /><path d="m0 5 5 2 6-4v7H0z" fill="#c4a55d" /><path d="M0 8h11v2H0z" fill="#584829" /></svg>
        <Fit w={147} className="ml-[5px]">15-5-1 (0).png - Picasa Photo Viewer</Fit>
        <div className="ml-auto flex items-center gap-[26px] pr-[13px] pb-[1px]">
          <svg viewBox="0 0 9 9" className="size-[9px]" stroke="#333"><path d="M.5 5h8" /></svg>
          <svg viewBox="0 0 9 9" className="size-[9px]" stroke="#222" fill="none"><path d="M1 1h7v7H1z" /></svg>
          <svg viewBox="0 0 9 9" className="size-[9px]" stroke="#444"><path d="m.5.5 8 8M8.500.5l-8 8" /></svg>
        </div>
      </div>
      <div className="h-[59px] shrink-0" />
      <Slide />
      <div className="h-[3px] bg-linear-to-b from-[#6c6a6b] to-[#807d7f]" />
    </div>
  );
}

/* ---------- Chat ---------- */

type Msg = { from: string; tail: string; fromW: number; tailW: number; gap: string; time: string; initials: string; color: string; lines: [string, number][]; width: string };
const blue = "bg-[#2079c0]";
const green = "bg-[#0d9080]";
const msgs: Msg[] = [
  { from: "Prabhat", tail: "to", fromW: 42, tailW: 11, gap: "ml-[3.5px]", time: "11:14 AM", initials: "P", color: blue, lines: [["can u allow him 2 speak", 148], ["and share some tips", 124]], width: "w-[167px]" },
  { from: "AJAY KAMBLE", tail: "to", fromW: 74, tailW: 11, gap: "ml-[4px]", time: "11:14 AM", initials: "AK", color: green, lines: [["Ok", 17]], width: "w-[59px]" },
  { from: "Dhilip Kumar", tail: "to", fromW: 69.5, tailW: 11, gap: "ml-[4px]", time: "11:14 AM", initials: "DK", color: blue, lines: [["Vishnu what is your", 118], ["exp?", 29]], width: "w-[137px]" },
  { from: "Bhagyashri Pan...", tail: "to", fromW: 91, tailW: 11, gap: "ml-[8px]", time: "11:15 AM", initials: "BP", color: blue, lines: [["in which group he share", 147], ["the project code", 102]], width: "w-[166px]" },
  { from: "AJAY KAMBLE", tail: "to", fromW: 74, tailW: 11, gap: "ml-[4px]", time: "11:15 AM", initials: "AK", color: green, lines: [["Telegram", 59]], width: "w-[78px]" },
];

const OkHand = () => (
  <svg viewBox="0 0 16 20" className="mt-[-4px] ml-[5px] h-5 w-4">
    <path d="M6.500 9Q6 4 8 2t2.800-.8Q11.500 2 10.500 4q1.500-2 2.800-1.200T13 6q1.500-1 2 0t-.5 3.500Q14 15 12.500 17 10.500 19.500 7 19 2 19 .8 16 0 12.500 1.500 10.500 4 8 6.500 9z" fill="#fdc336" />
    <path d="M9 8.500 10.500 4M11.500 9l1.700-3.500" stroke="#e59a26" strokeWidth=".8" fill="none" />
    <circle cx="5.200" cy="13.300" r="2.200" fill="#f2f1f6" stroke="#e59a26" strokeWidth=".8" />
  </svg>
);

function Chat() {
  return (
    <section className="flex w-[299px] flex-col overflow-hidden bg-white text-[#45454f]">
      <div className="flex h-[457px] shrink-0">
        <div className="w-[290px] pl-5">
          <div className="-mt-[17px] ml-[35px] flex h-[70px] w-[163px] flex-col justify-end rounded-[13px] bg-[#f1f1f6] pb-[5px] pl-[9px] text-[13.8px] leading-[18.8px]">
            <Fit w={105}>I also don&apos;t no sir</Fit>
            <Fit w={143}>seeing the requirement</Fit>
            <Fit w={74}>I developed</Fit>
          </div>
          {msgs.map((m, i) => (
            <div key={i} className="flex flex-col pt-[15px]">
              <div className="flex h-[19.200px] items-center pl-[35px] text-[12px] leading-none text-[#777786]">
                <Fit w={m.fromW}>{m.from}</Fit>
                <Fit w={m.tailW} className={m.gap}>{m.tail}</Fit>
                <Fit w={49} className="ml-[4px] text-[#2477e0]">Everyone</Fit>
                <Fit w={51} className="mr-[15px] ml-auto">{m.time}</Fit>
              </div>
              <div className="flex items-start">
                <div className={`mt-[2px] flex size-[26px] items-center justify-center rounded-[7px] text-[11px] text-white ${m.color}`}>
                  <Fit w={m.initials.length > 1 ? 14 : 6}>{m.initials}</Fit>
                </div>
                <div className={`ml-[9px] flex flex-col rounded-[13px] bg-[#f1f1f6] pl-[9px] text-[13.8px] leading-[18.8px] ${m.width} ${m.lines.length > 1 ? "h-[50px] pt-[7px]" : "h-[34px] pt-[8.5px]"}`}>
                  {m.lines.map(([s, w]) => (
                    <div key={s} className="flex"><Fit w={w}>{s}</Fit>{s === "Ok" && <OkHand />}</div>
                  ))}
                </div>
              </div>
            </div>
          ))}
        </div>
        <div className="ml-auto flex w-[9px] flex-col bg-[#f1f1f5] pt-[362px]"><div className="h-[93px] w-[7px] rounded bg-[#acacb6]" /></div>
      </div>
      <div className="ml-[1px] flex h-6 shrink-0 items-center bg-[#f6f6fb] pb-[1px] pl-[35px] text-[11.5px] leading-none text-[#6b6b7b]">
        <svg viewBox="0 0 13 13" className="size-[13px]" fill="none" stroke="#6b6b7b"><circle cx="5.500" cy="3.300" r="2.500" /><path d="M7 11.500H.8Q.5 7.500 5.500 7.500" /><circle cx="9.500" cy="9.500" r="3.300" fill="#0e71eb" stroke="none" /></svg>
        <Fit w={214} className="ml-[3px]">Who can see your messages? Recording On</Fit>
      </div>
      <div className="mt-[10px] flex h-[22px] shrink-0 items-center pr-4 pl-4 text-[11.5px] leading-none">
        <Fit w={14}>To:</Fit>
        <div className="ml-2 flex h-[21px] w-[68px] items-center rounded-[6px] bg-[#f1f1f6] pl-[7px] text-[#1f1f2b]">
          <Fit w={43}>Everyone</Fit>
          <svg viewBox="0 0 8 6" className="ml-[4px] h-[6px] w-2" fill="none" stroke="#1f1f2b" strokeWidth="1.500"><path d="m1 1 3 3 3-3" /></svg>
        </div>
        <svg viewBox="0 0 14 14" className="ml-auto size-[14px]" fill="none" stroke="#6e6e7c"><circle cx="7" cy="7" r="6.300" /><path d="M4 8.500q3 3.500 6 0z" /><path d="M4.800 4.500v1.500M9.200 4.500v1.500" strokeWidth="1.300" /></svg>
      </div>
      <div className="flex flex-col pt-[6px] pl-4 text-[11.8px] leading-[16px] text-[#777786]">
        <Fit w={242}>Your text can be seen by panelists and other</Fit>
        <Fit w={53}>attendees</Fit>
      </div>
    </section>
  );
}

/* ---------- Recorded desktop taskbar ---------- */

function InnerTaskbar() {
  const c = "w-[45.9px]";
  return (
    <div className="flex h-[37px] shrink-0 items-center bg-[#ececec] text-[#222]">
      <Cell w="w-[45px]"><WinLogo className="size-[15px]" /></Cell>
      <div className="flex h-full w-[321px] shrink-0 items-center border border-[#dadada] bg-white text-[13.5px] leading-none text-[#333]">
        <Lens className="ml-[10px] size-[15px]" />
        <Fit w={120} className="ml-[11px] pt-[1px]">Type here to search</Fit>
      </div>
      <Cell w={c}><Ring /></Cell>
      <Cell w={c}><TaskView /></Cell>
      <Cell w={c}><Edge /></Cell>
      <Cell w={c}><Folder /></Cell>
      <Cell w={c}><Store /></Cell>
      <Cell w={c}><Gift /></Cell>
      <Cell w={c}><Mail /></Cell>
      <Cell w={c}><Rec /></Cell>
      <div className="flex h-full w-[45.9px] shrink-0 items-center justify-center border-b-2 border-[#b03a68] bg-[#f8f8f8]"><ZoomIcon /></div>
      <Cell w={c}><Snip /></Cell>
      <Cell w={c}><Chrome /><span className="absolute bottom-0 left-1 h-[2px] w-[38px] bg-[#b03a68]" /></Cell>
      <div className="flex h-full w-[45px] shrink-0 items-center justify-center border-b-2 border-[#e88a36] bg-[#ffb673]">
        <svg viewBox="0 0 22 22" className="size-[22px]"><path d="M0 0h22v22H0z" fill="#fb1b5c" /><circle cx="11" cy="12.500" r="4" fill="none" stroke="#fff" strokeWidth="2.800" /><path d="m11 12 4-5" stroke="#fff" strokeWidth="1.500" /><path d="M5.500 8q5.500-5 11 0" stroke="#ff9dbb" strokeDasharray="1 1" fill="none" /></svg>
      </div>
      <div className="ml-[59px]"><Chevron /></div>
      <svg viewBox="0 0 14 18" className="ml-[9px] h-[17px] w-3.5" fill="none" stroke="#222" strokeWidth="1.300"><path d="M2 5.500h7v7H2zM9 7.500l3-1.500v6l-3-1.500M3 2.500q4-2.500 7 0M3 15.500q4 2.500 7 0" /></svg>
      <svg viewBox="0 0 14 14" className="ml-[8px] size-[14px]"><circle cx="7" cy="7" r="5.700" fill="#fff" stroke="#cf6a45" strokeWidth="1.600" /></svg>
      <svg viewBox="0 0 16 12" className="ml-[8px] h-3 w-4" fill="none" stroke="#111" strokeWidth="1.400"><path d="M6 3.500h8v6H4M15.300 5.500v2M1 1v3h3V1M2.500 4v5.500" /><path d="M6.500 5h4v3h-4z" fill="#111" stroke="none" /></svg>
      <svg viewBox="0 0 16 15" className="ml-[7px] h-[15px] w-4" fill="none" stroke="#222" strokeWidth="1.200"><path d="M3 2.500 14.500.7v9M3 2.500h-2v10h8M5 5h4M5 5v4h4M9 5l2 2" /><circle cx="12.500" cy="12" r="3" fill="#2367b5" stroke="none" /></svg>
      <div className="ml-[8px]"><Wifi fade /></div>
      <svg viewBox="0 0 16 14" className="ml-[6px] h-[13px] w-4" fill="none" stroke="#222" strokeWidth="1.200"><path d="M1 5h2.500l3-3v10l-3-3H1zM8.500 5q1.500 2 0 4" /><path d="M11 3.500q2.500 3.500 0 7M13 2q3.500 5 0 10" stroke="#aaa" /></svg>
      <div className="ml-[9px] flex text-[11.5px] leading-none"><Fit w={21}>ENG</Fit></div>
      <div className="ml-[12px] flex w-[54px] flex-col items-center pb-[3px] text-[11.5px] leading-[16px]"><Fit w={25}>11:15</Fit><Fit w={54}>27-02-2022</Fit></div>
      <div className="relative ml-[17px] h-[18px] w-[22px]">
        <svg viewBox="0 0 16 16" className="size-[15px]"><path d="M0 0h16v12H9v4l-4-4H0z" fill="#111" /><path d="M3 3.500h10M3 6.500h10M3 9.500h6" stroke="#ddd" /></svg>
        <span className="absolute top-[7px] left-[7px] flex size-[15px] items-center justify-center rounded-full border border-[#999] bg-[#dedede] text-[10px] leading-none">1</span>
      </div>
      <div className="mr-[3px] ml-auto h-full w-px bg-[#ccc]" />
    </div>
  );
}

export default function App() {
  return (
    <main className="flex h-[762px] w-[1365px] flex-col overflow-hidden bg-white font-['Noto_Sans','Open_Sans',sans-serif]">
      <TitleBar />
      <div className="flex h-[632px] shrink-0 flex-col bg-black px-11">
        <div className="flex h-[594px] shrink-0">
          <div className="flex w-[978px] shrink-0 flex-col overflow-hidden bg-[#1a1a1a]"><Explorer /></div>
          <Chat />
        </div>
        <InnerTaskbar />
      </div>
      <Controls />
      <OuterTaskbar />
    </main>
  );
}
